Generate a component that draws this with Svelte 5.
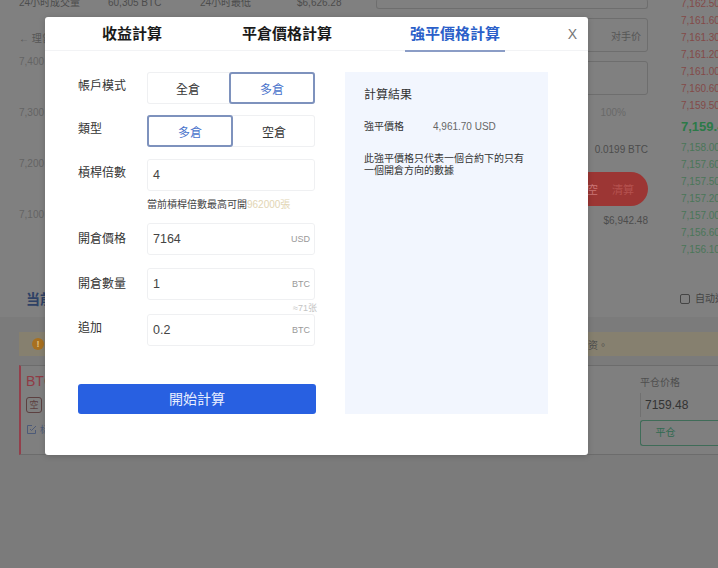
<script>
  const asks = ['7,162.50','7,161.60','7,161.30','7,161.20','7,161.00','7,160.60','7,159.50'];
  const bids = ['7,158.00','7,157.60','7,157.50','7,157.20','7,157.00','7,156.60','7,156.10'];
  const axis = ['7,400','7,300','7,200','7,100'];
</script>

<div class="page">
  <div class="bg-top">
    <div class="left">
      <div class="stats">
        <span class="s1">24小时成交量</span><span class="s2">60,305 BTC</span><span class="s3">24小时最低</span><span class="s4">$6,626.28</span>
      </div>
      <div class="legend">← 理曾</div>
      <div class="axis">
        {#each axis as a}<div>{a}</div>{/each}
      </div>
    </div>
    <div class="mid">
      <div class="box b0"></div>
      <div class="box b1"><span>对手价</span></div>
      <div class="box b2"></div>
      <div class="pct">100%</div>
      <div class="avail">0.0199 BTC</div>
      <div class="redbtn"><span>空</span><span class="dim">清算</span></div>
      <div class="cost">$6,942.48</div>
    </div>
    <div class="book">
      {#each asks as a}<div class="ask">{a}</div>{/each}
      <div class="last">7,159.48</div>
      {#each bids as b}<div class="bid">{b}</div>{/each}
    </div>
  </div>

  <div class="bg-bottom">
    <div class="tabs-row">
      <div class="cur">当前委托</div>
      <label class="auto"><i></i>自动追加</label>
    </div>
    <div class="banner"><b>!</b><span class="bt">资。</span></div>
    <div class="card">
      <div class="card-left">
        <div class="sym">BTC</div>
        <div class="tag">空</div>
        <div class="edit">
          <svg width="11" height="11" viewBox="0 0 11 11" fill="none" stroke="#4d5a78" stroke-width="1"><path d="M9.5 6v3.5h-8v-8H6"/><path d="M4 5l1.5 1.5L10 2"/></svg>
          <span>标</span>
        </div>
      </div>
      <div class="card-right">
        <div class="cl">平仓价格</div>
        <div class="ci">7159.48</div>
        <div class="cb">平仓</div>
      </div>
    </div>
  </div>

  <div class="modal">
    <div class="m-tabs">
      <div class="m-tab t1">收益計算</div>
      <div class="m-tab t2">平倉價格計算</div>
      <div class="m-tab t3 on">強平價格計算</div>
      <div class="close">X</div>
    </div>
    <div class="m-body">
      <div class="form">
        <div class="row r1">
          <div class="lb">帳戶模式</div>
          <div class="seg"><div>全倉</div><div class="sel">多倉</div></div>
        </div>
        <div class="row r2">
          <div class="lb">類型</div>
          <div class="seg"><div class="sel">多倉</div><div>空倉</div></div>
        </div>
        <div class="row r3">
          <div class="lb">槓桿倍數</div>
          <div class="inp"><span class="v">4</span></div>
        </div>
        <div class="hint">當前槓桿倍數最高可開<em>962000張</em></div>
        <div class="row r4">
          <div class="lb">開倉價格</div>
          <div class="inp"><span class="v">7164</span><span class="u">USD</span></div>
        </div>
        <div class="row r5">
          <div class="lb">開倉數量</div>
          <div class="inp"><span class="v">1</span><span class="u">BTC</span></div>
        </div>
        <div class="approx">≈71张</div>
        <div class="row r6">
          <div class="lb">追加</div>
          <div class="inp"><span class="v">0.2</span><span class="u">BTC</span></div>
        </div>
        <button class="go">開始計算</button>
      </div>
      <div class="result">
        <div class="r-title">計算結果</div>
        <div class="r-line"><span class="k">強平價格</span><span class="val">4,961.70 USD</span></div>
        <p>此強平價格只代表一個合約下的只有一個開倉方向的數據</p>
      </div>
    </div>
  </div>
</div>

<style>
  :global(body) { margin: 0; background: #7b7b7b; }
  .page {
    width: 718px; height: 568px; overflow: hidden; position: relative; background: #7b7b7b;
    font-family: "Liberation Sans", "Noto Sans CJK TC", sans-serif; color: #333;
  }
  .bg-top { display: flex; height: 291px; background: #808080; }
  .left { width: 376px; flex: none; padding-left: 19px; box-sizing: border-box; }
  .stats { display: flex; height: 6px; font-size: 10px; line-height: 12px; color: #4c4c4c; margin-top: -3px; }
  .s1 { width: 89px; } .s2 { width: 92px; } .s3 { width: 97px; }
  .legend { margin-top: 30px; font-size: 10px; line-height: 12px; color: #565656; }
  .axis { margin-top: 11px; color: #646464; font-size: 10px; }
  .axis div { height: 51px; line-height: 12px; }

  .mid { width: 272px; flex: none; font-size: 10px; color: #4c4c4c; }
  .box { border: 1px solid #6e6e6e; border-radius: 3px; box-sizing: border-box; }
  .b0 { height: 10px; margin-top: -1px; border-top: 0; }
  .b1 { height: 34px; margin-top: 9px; display: flex; align-items: center; justify-content: flex-end; padding-right: 6px; color: #555; font-size: 10px; }
  .b2 { height: 34px; margin-top: 9px; }
  .pct { margin-top: 12px; height: 12px; line-height: 12px; text-align: right; padding-right: 22px; color: #696969; }
  .avail { margin-top: 25px; line-height: 12px; text-align: right; padding-right: 0; }
  .redbtn { margin-top: 16px; height: 34px; border-radius: 0 17px 17px 0; background: #9c3634; color: #c77; display: flex; align-items: center; justify-content: flex-end; gap: 14px; padding-right: 14px; font-size: 11px; }
  .dim { color: #b5524f; }
  .cost { margin-top: 9px; line-height: 12px; text-align: right; }

  .book { padding: 0 0 0 33px; font-size: 10px; margin-top: -5px; }
  .book div { height: 17px; line-height: 17px; white-space: nowrap; }
  .ask { color: #834a48; }
  .bid { color: #4a7658; }
  .book .last { height: 24px; line-height: 24px; margin: 1px 0 0; color: #2c7a48; font-size: 13px; font-weight: 700; }

  .bg-bottom { height: 277px; background: #7b7b7b; }
  .tabs-row { height: 26px; margin-left: 19px; display: flex; justify-content: space-between; position: relative; background: #808080; margin-left: 0; padding-left: 26px; box-sizing: border-box; }
  .cur { font-size: 14px; font-weight: 700; color: #2e4165; line-height: 16px; margin-left: 0; }
  .auto { display: flex; align-items: flex-start; gap: 5px; font-size: 10px; color: #444; width: 38px; white-space: nowrap; line-height: 16px; }
  .auto i { width: 8px; height: 8px; border: 1px solid #444; border-radius: 2px; margin-top: 3px; flex: none; }
  .banner { height: 24px; margin-left: 19px; margin-top: 15px; background: #86806f; display: flex; align-items: center; justify-content: space-between; }
  .banner b { width: 12px; height: 12px; border-radius: 50%; background: #a8701f; color: #e0c080; font-size: 9px; text-align: center; line-height: 12px; margin-left: 13px; }
  .bt { margin-right: 110px; font-size: 10px; color: #4c4c4c; }
  .card { height: 90px; margin-top: 9px; margin-left: 19px; border-left: 2px solid #933f4b; border-top: 1px solid #6c6c6c; border-bottom: 1px solid #6c6c6c; box-sizing: border-box; background: #7f7f7f; display: flex; justify-content: space-between; }
  .card-left { padding: 5px 0 0 5px; }
  .sym { font-size: 14px; color: #8f3b45; line-height: 20px; }
  .tag { width: 14px; height: 14px; border: 1px solid #5c4040; border-radius: 3px; font-size: 9px; line-height: 14px; text-align: center; color: #5c4040; margin-top: 6px; }
  .edit { display: flex; gap: 3px; align-items: center; font-size: 9px; margin-top: 10px; color: #4d5a78; }
  .card-right { width: 78px; padding-top: 10px; }
  .cl { font-size: 10px; line-height: 14px; color: #4e4e4e; }
  .ci { margin-top: 3px; height: 24px; line-height: 24px; font-size: 12px; padding-left: 4px; color: #333; border-left: 1px solid #707070; }
  .cb { margin-top: 3px; height: 26px; line-height: 24px; box-sizing: border-box; border: 1px solid #3f6c58; border-right: 0; border-radius: 3px 0 0 3px; text-align: center; font-size: 10px; color: #2f6a50; padding-right: 28px; padding-left: 0; }

  .modal {
    position: absolute; left: 45px; top: 17px; width: 543px; height: 438px;
    background: #fff; border-radius: 3px; box-shadow: 0 1px 6px rgba(0,0,0,.18); overflow: hidden;
  }
  .m-tabs { height: 34px; display: flex; position: relative; border-bottom: 1px solid #f2f3f5; box-sizing: border-box; }
  .m-tab { font-size: 15px; font-weight: 700; line-height: 33px; color: #1a1a1a; white-space: nowrap; height: 35px; box-sizing: border-box; }
  .t1 { margin-left: 57px; }
  .t2 { margin-left: 80px; }
  .t3 { margin-left: 73px; padding: 0 5px 0 5px; color: #2b5fc9; border-bottom: 2px solid #8b9dc6; }
  .close { position: absolute; right: 11px; top: 8px; font-size: 14px; line-height: 18px; color: #777; }
  .m-body { display: flex; padding: 21px 0 0 33px; }
  .form { width: 239px; flex: none; }
  .row { display: flex; }
  .lb { width: 69px; flex: none; font-size: 12px; line-height: 16px; color: #333; margin-top: 6px; }
  .seg { width: 168px; height: 32px; display: flex; box-sizing: border-box; border-radius: 3px; box-shadow: 0 0 0 1px #eff0f2 inset; font-size: 12px; }
  .seg div { flex: 1; display: flex; align-items: center; justify-content: center; color: #333; box-sizing: border-box; }
  .seg .sel { border: 2px solid #7e92bd; border-radius: 3px; color: #4a74cc; }
  .r2 { margin-top: 11px; }
  .r3 { margin-top: 12px; }
  .inp { width: 168px; height: 32px; box-sizing: border-box; border: 1px solid #eff0f2; border-radius: 3px; display: flex; align-items: center; justify-content: space-between; padding: 0 4px 0 5px; }
  .v { font-size: 12.5px; color: #444; }
  .u { font-size: 9px; color: #999; }
  .hint { height: 32px; margin-left: 69px; font-size: 10px; line-height: 28px; color: #444; white-space: nowrap; }
  .hint em { font-style: normal; color: #e2d5b4; }
  .r5 { margin-top: 13px; }
  .r5 .lb { margin-top: 8px; }
  .r4 .lb { margin-top: 8px; }
  .approx { height: 14px; font-size: 9px; line-height: 16px; color: #c4c4c4; text-align: right; margin-right: 0; }
  .r6 .lb { margin-top: 6px; }
  .go { display: block; width: 238px; height: 30px; margin: 38px 0 0; border: 0; border-radius: 3px; background: #2860e1; color: #e8efff; font: 14px "Liberation Sans", "Noto Sans CJK TC", sans-serif; padding: 0 0 2px; }
  .result { width: 203px; height: 342px; margin-left: 28px; background: #f2f6fe; box-sizing: border-box; padding: 15px 19px; flex: none; }
  .r-title { font-size: 12px; line-height: 16px; color: #333; }
  .r-line { display: flex; margin-top: 17px; font-size: 10px; line-height: 14px; }
  .k { width: 69px; color: #333; }
  .val { color: #666; }
  p { margin: 19px 0 0; width: 165px; font-size: 10px; line-height: 12px; color: #333; }
</style>
